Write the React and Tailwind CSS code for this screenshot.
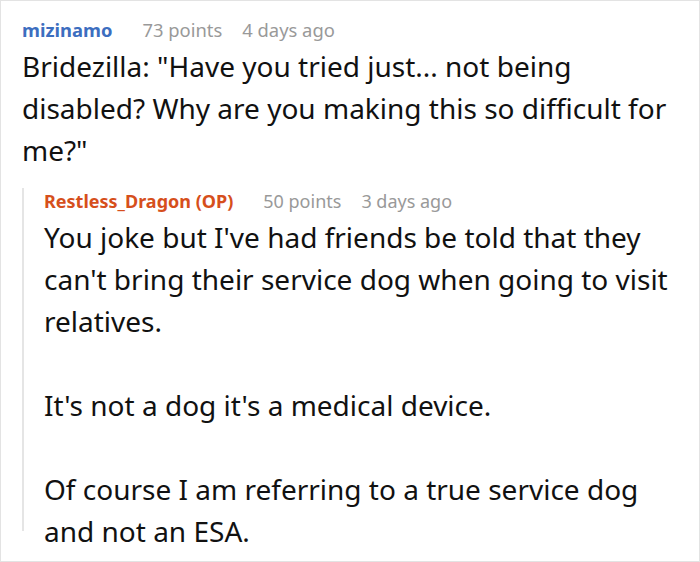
export default function App() {
  return (
    <div
      className="w-[700px] h-[562px] border border-[#e3e3e3] bg-white pl-[21px] pr-4 pt-[16px] overflow-hidden"
      style={{ fontFamily: '"Noto Sans", "Open Sans", sans-serif' }}
    >
      <div className="flex items-baseline text-[18.4px] leading-[26px]">
        <span className="font-bold text-[#3c6ebf]">mizinamo</span>
        <span className="ml-[30px] text-[#999999]">73 points</span>
        <span className="ml-[20px] text-[#999999]">4 days ago</span>
      </div>
      <p className="mt-[2px] text-[28px] leading-[42px] text-[#111111]">
        Bridezilla: "Have you tried just... not being disabled? Why are you
        making this so difficult for me?"
      </p>

      <div className="mt-[29px] h-[343px] border-l-2 border-[#e5e5e5] pl-5">
        <div className="-mt-[12px] flex items-baseline text-[18px] leading-[26px]">
          <span className="font-bold text-[#d64f1c]">Restless_Dragon (OP)</span>
          <span className="ml-[30px] text-[#999999]">50 points</span>
          <span className="ml-[20px] text-[#999999]">3 days ago</span>
        </div>
        <div className="mt-[2px] text-[28px] leading-[42px] text-[#111111]">
          <p>
            You joke but I've had friends be told that they can't bring their
            service dog when going to visit relatives.
          </p>
          <p className="mt-[42px]">It's not a dog it's a medical device.</p>
          <p className="mt-[42px]">
            Of course I am referring to a true service dog and not an ESA.
          </p>
        </div>
      </div>
    </div>
  );
}
